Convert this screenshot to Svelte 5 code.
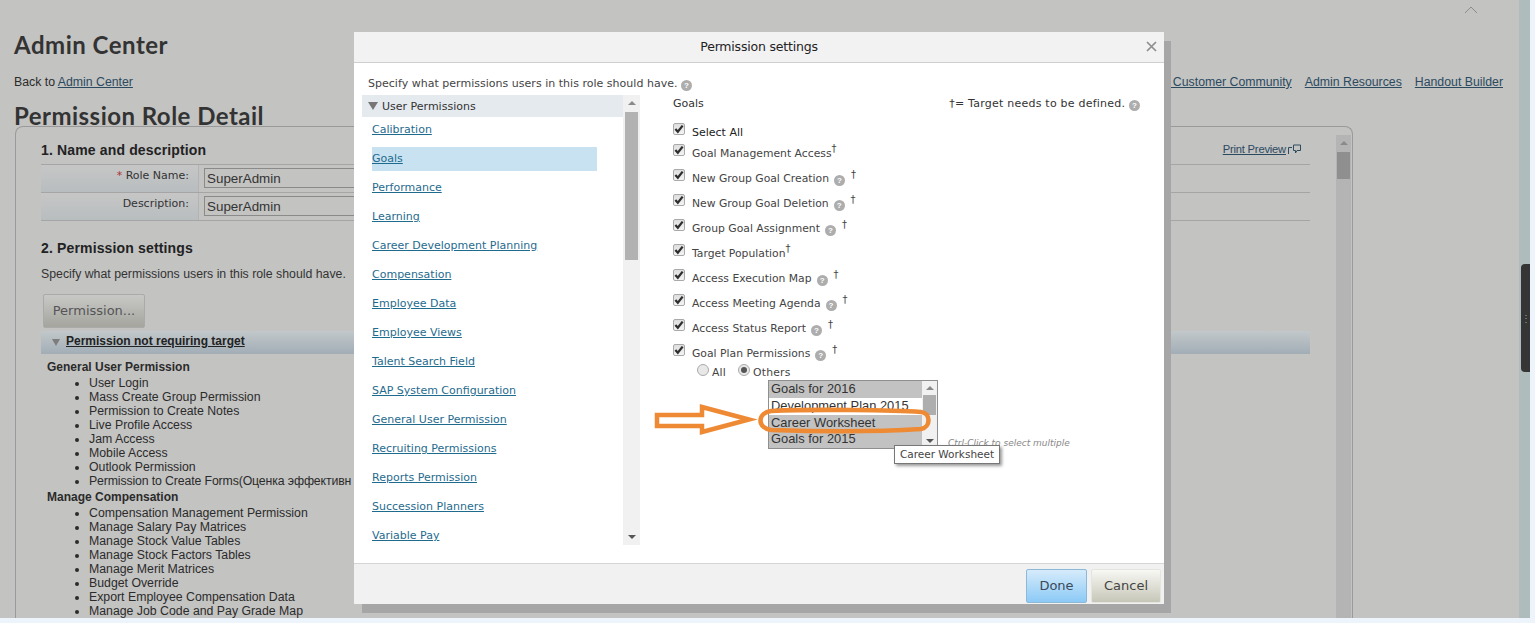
<script>
  const general = ['User Login','Mass Create Group Permission','Permission to Create Notes','Live Profile Access','Jam Access','Mobile Access','Outlook Permission','Permission to Create Forms(Оценка эффективн'];
  const comp = ['Compensation Management Permission','Manage Salary Pay Matrices','Manage Stock Value Tables','Manage Stock Factors Tables','Manage Merit Matrices','Budget Override','Export Employee Compensation Data','Manage Job Code and Pay Grade Map'];
  const cats = ['Calibration','Goals','Performance','Learning','Career Development Planning','Compensation','Employee Data','Employee Views','Talent Search Field','SAP System Configuration','General User Permission','Recruiting Permissions','Reports Permission','Succession Planners','Variable Pay'];
  const perms = [
    { t: 'Goal Management Access', help: false },
    { t: 'New Group Goal Creation', help: true },
    { t: 'New Group Goal Deletion', help: true },
    { t: 'Group Goal Assignment', help: true },
    { t: 'Target Population', help: false },
    { t: 'Access Execution Map', help: true },
    { t: 'Access Meeting Agenda', help: true },
    { t: 'Access Status Report', help: true },
    { t: 'Goal Plan Permissions', help: true }
  ];
  const plans = [['Goals for 2016', true],['Development Plan 2015', false],['Career Worksheet', true],['Goals for 2015', true]];
</script>

{#snippet help()}
  <span class="help">?</span>
{/snippet}
{#snippet check()}
  <span class="check"><svg viewBox="0 0 11 11" width="10" height="10"><path d="M1.5 5.5 L4.2 8.5 L9.5 1.8" fill="none" stroke="#2e2e2e" stroke-width="2.5"/></svg></span>
{/snippet}

<div class="shell">
  <div class="page">
    <div class="topbar">
      <svg class="chev" width="14" height="8" viewBox="0 0 14 8"><path d="M1 7 L7 1 L13 7" fill="none" stroke="#8c8c8c" stroke-width="1"/></svg>
    </div>
    <h1>Admin Center</h1>
    <div class="crumbs">
      <span>Back to <a href="#a">Admin Center</a></span>
      <nav>
        <a href="#a">Go to Customer Community</a>
        <a href="#a">Admin Resources</a>
        <a href="#a">Handout Builder</a>
      </nav>
    </div>
    <h2>Permission Role Detail</h2>
    <section class="panel">
      <div class="panel-inner">
        <div class="sec-head">
          <h3>1. Name and description</h3>
          <a class="print" href="#a">Print Preview<svg width="14" height="11" viewBox="0 0 14 11"><path d="M0.5 10V3.5H4M5.5 1H12.5V6.5H9L7.5 9V6.5H5.5Z" fill="none" stroke="#2d4a60"/></svg></a>
        </div>
        <div class="form-row">
          <div class="lab"><i>*</i> Role Name:</div>
          <div class="val"><span class="inp">SuperAdmin</span></div>
        </div>
        <div class="form-row">
          <div class="lab">Description:</div>
          <div class="val"><span class="inp">SuperAdmin</span></div>
        </div>
        <h3 class="second">2. Permission settings</h3>
        <p class="spec">Specify what permissions users in this role should have.</p>
        <button class="perm">Permission...</button>
        <div class="bar"><span class="tri"></span><a href="#a">Permission not requiring target</a></div>
        <div class="groups">
          <div class="g">General User Permission</div>
          <ul class="first-list">{#each general as p}<li>{p}</li>{/each}</ul>
          <div class="g second-g">Manage Compensation</div>
          <ul>{#each comp as p}<li>{p}</li>{/each}</ul>
        </div>
      </div>
      <div class="pscroll">
        <span class="up"></span>
        <span class="thumb"></span>
      </div>
    </section>
  </div>
  <div class="rail"><div class="handle"><span>⋮</span></div></div>

  <div class="shadow"></div>
  <div class="modal">
    <header>Permission settings
      <svg class="x" width="11" height="11" viewBox="0 0 11 11"><path d="M1 1L10 10M10 1L1 10" stroke="#8e8e8e" stroke-width="1.7"/></svg>
    </header>
    <div class="mbody">
      <div class="intro">Specify what permissions users in this role should have. {@render help()}</div>
      <div class="cols">
        <div class="tree">
          <div class="tree-main">
            <div class="tree-head"><span class="tri2"></span>User Permissions</div>
            <div class="tree-list">
              {#each cats as c, i}
                <a href="#a" class:sel={i === 1}>{c}</a>
              {/each}
            </div>
          </div>
          <div class="tscroll">
            <span class="up"></span>
            <span class="tthumb"></span>
            <span class="down"></span>
          </div>
        </div>
        <div class="detail">
          <div class="dhead">
            <span>Goals</span>
            <span class="note">†= Target needs to be defined. {@render help()}</span>
          </div>
          <div class="selall">{@render check()}<b>Select All</b></div>
          {#each perms as p, i}
            <div class="prow" class:first={i === 0}>
              {@render check()}
              <span>{p.t}</span>
              {#if p.help}{@render help()}<sup class="spaced">†</sup>{:else}<sup>†</sup>{/if}
            </div>
          {/each}
          <div class="radios">
            <span class="radio"></span><span class="rl">All</span>
            <span class="radio on"></span><span class="rl">Others</span>
          </div>
          <div class="listwrap">
            <div class="listbox">
              <div class="opts">
                {#each plans as [p, s]}
                  <div class="opt" class:s>{p}</div>
                {/each}
              </div>
              <div class="lscroll">
                <span class="up"></span>
                <span class="lthumb"></span>
                <span class="down"></span>
              </div>
            </div>
            <em>Ctrl-Click to select multiple</em>
            <div class="tooltip">Career Worksheet</div>
            <svg class="mark" width="290" height="34" viewBox="0 0 290 34">
              <path d="M4 12H49V4L96 16.5L49 29V23H4Z" fill="none" stroke="#ef8a34" stroke-width="4.5"/>
              <path d="M118 8C160 6 240 7 268 9C278 10 278 24 268 26C220 29 150 28 118 27C104 25 104 10 118 8Z" fill="none" stroke="#ef8a34" stroke-width="4.6"/>
            </svg>
          </div>
        </div>
      </div>
    </div>
    <footer>
      <button class="done">Done</button>
      <button class="cancel">Cancel</button>
    </footer>
  </div>
</div>

<style>
  :global(body) { margin: 0; background: #eef4fb; }
  .shell { position: relative; width: 1535px; height: 623px; overflow: hidden; background: #eef4fb; }
  .page { width: 1519px; height: 618px; background: #c3c3c2; overflow: hidden; box-sizing: border-box; padding: 0 0 0 14px; font-family: "Liberation Sans", Arial, sans-serif; font-size: 12.3px; color: #2b2b2b; }
  a { color: #2b4a60; }
  .topbar { height: 32px; position: relative; }
  .chev { position: absolute; right: 41px; top: 6px; }
  h1 { margin: 0; height: 26px; font: bold 24px/26px Lato, sans-serif; color: #333; letter-spacing: 0.5px; }
  .crumbs { display: flex; justify-content: space-between; margin-top: 17px; height: 14px; line-height: 14px; padding-right: 16px; }
  nav { display: flex; gap: 13px; }
  h2 { margin: 0; margin-top: 13px; height: 28px; font: bold 24px/28px Lato, sans-serif; color: #333; letter-spacing: 0.47px; }
  .panel { margin: -4px 0 0 1px; width: 1338px; height: 600px; box-sizing: border-box; border: 1.5px solid #9a9a9a; border-radius: 8px 8px 0 0; border-bottom: 0; display: flex; padding: 0 1px 0 25px; justify-content: space-between; }
  .panel-inner { width: 1269px; }
  .sec-head { display: flex; justify-content: space-between; align-items: flex-end; height: 38px; padding-bottom: 1px; box-sizing: border-box; border-bottom: 1px solid #a5a5a5; padding-right: 8px; }
  h3 { margin: 0; font: bold 14px/18px "Liberation Sans", sans-serif; letter-spacing: 0.15px; color: #222; padding-bottom: 3px; }
  .sec-head h3 { padding-bottom: 4px; }
  .print { font-size: 11.2px; padding-bottom: 8px; letter-spacing: -0.2px; display: flex; gap: 2px; align-items: center; }
  .print svg { flex: none; }
  .form-row { display: flex; height: 28px; border-bottom: 1px solid #a5a5a5; box-sizing: border-box; }
  .lab { width: 157px; box-sizing: border-box; text-align: right; padding: 2px 9px 0 0; font: 11px/18px "DejaVu Sans", sans-serif; color: #333; background: linear-gradient(#c6c6c6, #b8bdbf); }
  .lab i { color: #a33; font-style: normal; }
  .val { flex: 1; padding: 3px 0 0 5px; border-left: 1px solid #b3b3b3; }
  .inp { display: block; width: 420px; height: 20px; box-sizing: border-box; border: 1px solid #8a8a8a; font: 13.4px/19px "Liberation Sans", sans-serif; padding-left: 2px; color: #333; }
  .second { margin-top: 18px; }
  .spec { margin: 7px 0 0; line-height: 14px; color: #333; }
  .perm { display: block; margin: 13px 0 0 2px; width: 102px; height: 34px; border: 1px solid #aaa; border-radius: 2px; background: linear-gradient(#c8c8c6, #a5a59e); font: 13px "DejaVu Sans", sans-serif; color: #555; padding: 0 0 2px; }
  .bar { margin-top: 3px; height: 23px; box-sizing: border-box; padding: 0 0 4px 11px; background: linear-gradient(#c2c8ca, #a2adb6); display: flex; align-items: center; gap: 6px; font-size: 12px; font-weight: bold; }
  .bar a { color: #222; }
  .tri { width: 0; height: 0; border-left: 4px solid transparent; border-right: 4px solid transparent; border-top: 7px solid #7d7d7d; margin-top: 3px; }
  .groups { padding: 6px 0 0 6px; }
  .g { font-size: 12px; font-weight: bold; line-height: 15px; color: #2b2b2b; }
  .second-g { margin-top: 2px; }
  .groups ul { margin: 1px 0 0; padding: 0 0 0 42px; list-style: disc; }
  .groups li { line-height: 14px; height: 14px; white-space: nowrap; }
  .first-list li:last-child { letter-spacing: -0.13px; }
  .pscroll { width: 15px; margin-top: 8px; background: #b4b4b4; display: flex; flex-direction: column; align-items: center; height: 592px; }
  .pscroll .thumb { width: 13px; height: 27px; background: #8f8f8f; margin-top: 7px; }
  .up, .down { width: 0; height: 0; border-left: 4px solid transparent; border-right: 4px solid transparent; flex: none; }
  .up { border-bottom: 4px solid #8a8a8a; margin-top: 6px; }
  .down { border-top: 4px solid #555; margin-top: auto; margin-bottom: 6px; }
  .rail { position: absolute; left: 1519px; top: 0; width: 11px; height: 618px; background: #aebcbc; }
  .handle { position: absolute; left: 2px; top: 264px; width: 9px; height: 108px; background: #353535; border-radius: 4px 0 0 4px; color: #999; font-size: 10px; display: flex; align-items: center; justify-content: center; }

  .shadow { position: absolute; left: 362px; top: 41px; width: 809px; height: 572px; background: #a6a6a6; }
  .modal { position: absolute; left: 354px; top: 32px; width: 810px; height: 572px; background: #fff; display: flex; flex-direction: column; font-family: "DejaVu Sans", sans-serif; font-size: 11px; color: #444; }
  header { height: 31px; box-sizing: border-box; background: #f2f2f2; border-bottom: 1px solid #cfcfcf; text-align: center; font-size: 12.5px; line-height: 29px; color: #222; position: relative; letter-spacing: -0.2px; }
  .x { position: absolute; right: 7px; top: 9px; }
  .mbody { flex: 1; padding: 0 0 0 8px; }
  .intro { padding: 13px 0 0 6px; height: 19px; line-height: 15px; letter-spacing: 0.02px; }
  .help { display: inline-flex; align-items: center; justify-content: center; width: 11px; height: 11px; border-radius: 50%; background: #adadad; color: #fff; font: bold 8px/11px "Liberation Sans", sans-serif; vertical-align: -1px; }
  .cols { display: flex; margin-top: 0; }
  .tree { display: flex; width: 278px; height: 450px; }
  .tree-main { width: 261px; }
  .tree-head { height: 22px; background: #e5eaef; display: flex; align-items: center; color: #333; padding-left: 6px; gap: 4px; }
  .tri2 { width: 0; height: 0; border-left: 5px solid transparent; border-right: 5px solid transparent; border-top: 8px solid #777; }
  .tree-list { padding: 1px 0 0 10px; display: flex; flex-direction: column; }
  .tree-list a { height: 24px; margin-top: 5px; width: 225px; line-height: 14px; color: #1f6b8e; box-sizing: border-box; display: flex; align-items: center; }
  .tree-list a:first-child { margin-top: 0; }
  .tree-list a.sel { background: #c8e2f2; }
  .tscroll { width: 17px; background: #f1f1f1; display: flex; flex-direction: column; align-items: center; }
  .tthumb { width: 13px; height: 148px; background: #b2b2b2; margin-top: 7px; }
  .detail { width: 500px; padding-left: 33px; box-sizing: border-box; font-size: 10.8px; }
  .dhead { display: flex; justify-content: space-between; height: 24px; padding: 2px 0 0 0; box-sizing: border-box; line-height: 14px; color: #333; font-size: 11px; }
  .note { letter-spacing: 0.23px; }
  .selall, .prow { display: flex; align-items: flex-start; color: #444; }
  .selall { height: 21px; gap: 7px; margin-top: 6px; }
  .selall b { font-weight: normal; font-size: 11px; color: #222; padding-top: 1px; line-height: 14px; }
  .prow { height: 25px; line-height: 14px; white-space: nowrap; }
  .prow.first { height: 25px; }
  .prow > span:nth-child(2) { margin: 1px 0 0 7px; }
  .prow .help { margin: 4px 0 0 5px; }
  sup { font-size: 10px; line-height: 10px; margin-top: -2px; vertical-align: baseline; }
  sup.spaced { margin: -1px 0 0 6px; }
  .check { width: 12px; height: 12px; box-sizing: border-box; border: 1px solid #a9a9a9; border-radius: 2px; background: linear-gradient(#dedede, #f4f4f4); display: inline-flex; align-items: center; justify-content: center; flex: none; margin-top: -2px; }
  .radios { display: flex; align-items: center; height: 14px; margin: -6px 0 0 24px; gap: 3px; }
  .rl { margin-right: 9px; letter-spacing: 0.2px; }
  .radio { width: 12px; height: 12px; box-sizing: border-box; border: 1px solid #aaa; border-radius: 50%; background: #e8e8e8; position: relative; top: -2px; }
  .radio.on::after { content: ""; position: absolute; inset: 2px; border-radius: 50%; background: #555; }
  .listwrap { position: relative; height: 70px; padding-left: 95px; margin-top: 1px; }
  .listbox { width: 170px; height: 69px; box-sizing: border-box; border: 1px solid #8f8f8f; display: flex; background: #fff; font: 12.9px/16px "Liberation Sans", sans-serif; color: #333; overflow: hidden; }
  .opts { flex: 1; overflow: hidden; }
  .opt { height: 16.75px; padding-left: 2px; white-space: nowrap; }
  .opt.s { background: #c2c2c2; }
  .lscroll { width: 15px; background: #f1f1f1; display: flex; flex-direction: column; align-items: center; }
  .lscroll .up { margin-top: 5px; }
  .lscroll .down { margin-bottom: 5px; }
  .lthumb { width: 13px; height: 20px; background: #aeaeae; margin-top: 5px; }
  em { position: absolute; left: 275px; top: 57px; font-size: 9px; line-height: 12px; color: #888; white-space: nowrap; }
  .tooltip { position: absolute; left: 221px; top: 65px; height: 19px; width: 106px; box-sizing: border-box; border: 1px solid #777; background: #fff; font-size: 10.5px; line-height: 17px; text-align: center; color: #444; box-shadow: 2px 2px 3px #999; white-space: nowrap; }
  .mark { position: absolute; left: -20px; top: 23px; }
  footer { height: 41px; box-sizing: border-box; background: #f1f1f1; border-top: 1px solid #d5d5d5; display: flex; justify-content: flex-end; gap: 4px; padding: 5px 3px 0 0; }
  footer button { height: 34px; font: 13px "DejaVu Sans", sans-serif; padding: 0 0 2px; border-radius: 2px; }
  .done { width: 61px; background: linear-gradient(#d6ebfb, #8ccaf6); border: 1px solid #8db9d8; color: #3a4a5a; }
  .cancel { width: 70px; background: linear-gradient(#f8f8f4, #c6c6b8); border: 1px solid #e5e5e0; color: #444; }
</style>
